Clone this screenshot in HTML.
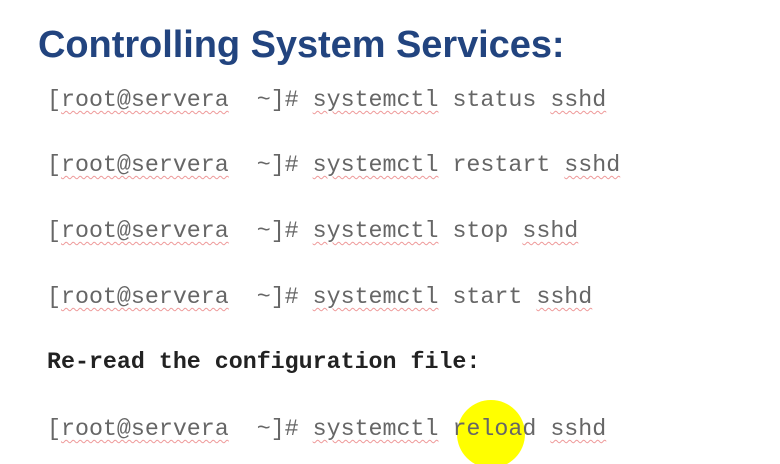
<!DOCTYPE html>
<html><head><meta charset="utf-8"><style>
html,body{margin:0;padding:0;background:#fff;width:780px;height:464px;overflow:hidden;position:relative}
.t{position:absolute;left:38px;top:24px;font-family:"Liberation Sans",sans-serif;font-weight:bold;font-size:38px;color:#22447f;letter-spacing:-0.05px;white-space:nowrap}
.l{position:absolute;left:47px;font-family:"Liberation Mono",monospace;font-size:23.3px;color:#666;white-space:pre;line-height:1}
.b{font-weight:bold;color:#222}
.u{text-decoration:underline wavy #e99;text-decoration-thickness:1px;text-underline-offset:4px}
.c{position:absolute;left:457px;top:400px;width:68px;height:68px;border-radius:50%;background:#ffff00;}
</style></head><body>
<div class="t">Controlling System Services:</div>
<div class="c"></div>
<div class="l" style="top:89px">[<span class="u">root@servera</span>  ~]# <span class="u">systemctl</span> status <span class="u">sshd</span></div>
<div class="l" style="top:154px">[<span class="u">root@servera</span>  ~]# <span class="u">systemctl</span> restart <span class="u">sshd</span></div>
<div class="l" style="top:220px">[<span class="u">root@servera</span>  ~]# <span class="u">systemctl</span> stop <span class="u">sshd</span></div>
<div class="l" style="top:286px">[<span class="u">root@servera</span>  ~]# <span class="u">systemctl</span> start <span class="u">sshd</span></div>
<div class="l b" style="top:351px">Re-read the configuration file:</div>
<div class="l" style="top:418px">[<span class="u">root@servera</span>  ~]# <span class="u">systemctl</span> reload <span class="u">sshd</span></div>
</body></html>
